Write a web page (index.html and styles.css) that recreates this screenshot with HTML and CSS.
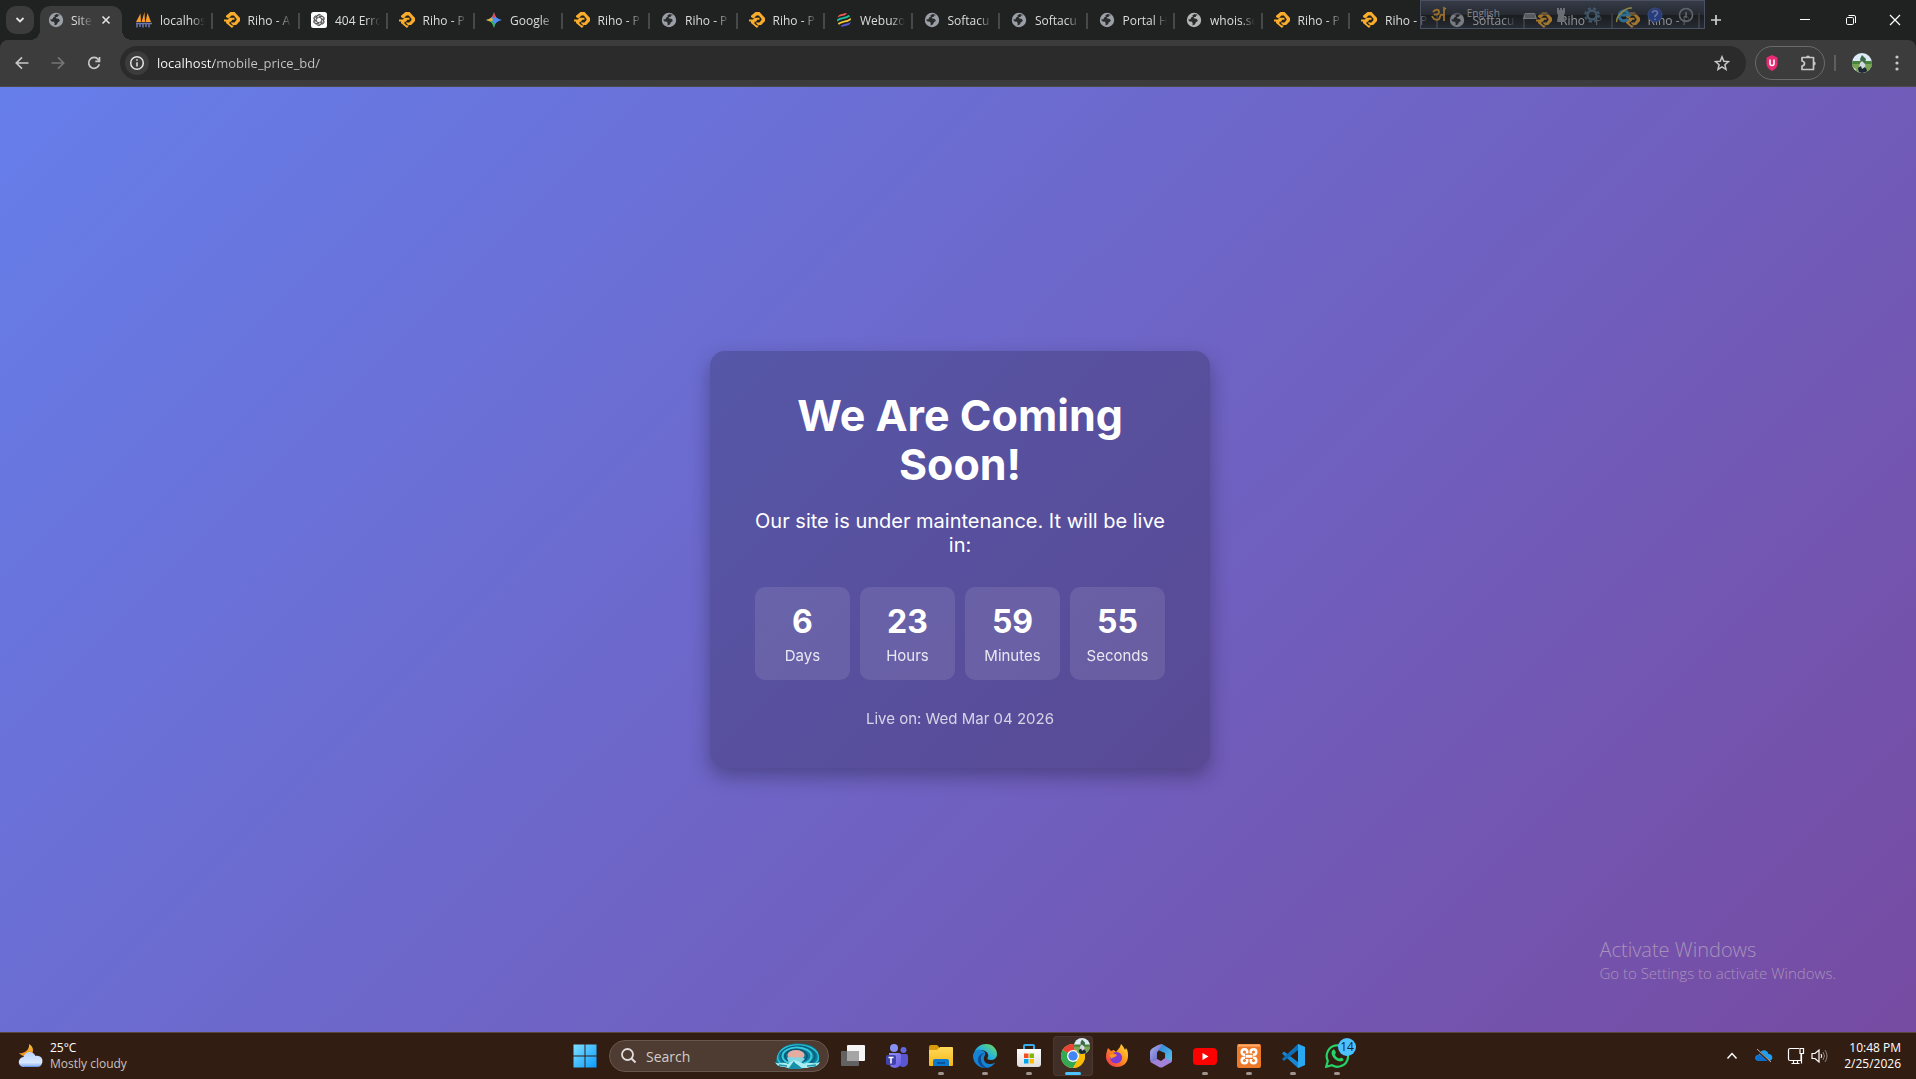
FILE: index.html
```html
<!DOCTYPE html>
<html lang="en">
<head>
<meta charset="utf-8">
<title>Site Under Maintenance</title>
<link rel="stylesheet" href="styles.css">
</head>
<body>
<svg class="defs" aria-hidden="true">
  <defs>
    <linearGradient id="gStart" x1="0" y1="0" x2="1" y2="1"><stop offset="0" stop-color="#7fe0ff"/><stop offset="1" stop-color="#0a9bff"/></linearGradient>
    <linearGradient id="gCloud" x1="0" y1="0" x2="0" y2="1"><stop offset="0" stop-color="#b9d0f8"/><stop offset=".7" stop-color="#d8e8ff"/><stop offset="1" stop-color="#7fa8ee"/></linearGradient>
    <linearGradient id="gMoon" x1="0" y1="0" x2="0" y2="1"><stop offset="0" stop-color="#f6c544"/><stop offset="1" stop-color="#f0860f"/></linearGradient>
    <linearGradient id="gTeams" x1="0" y1="0" x2="1" y2="1"><stop offset="0" stop-color="#8f93f5"/><stop offset="1" stop-color="#6a5be6"/></linearGradient>
    <linearGradient id="gFolder" x1="0" y1="0" x2="0" y2="1"><stop offset="0" stop-color="#ffd95a"/><stop offset="1" stop-color="#f7b718"/></linearGradient>
    <linearGradient id="gEdge" x1="0" y1="1" x2="1" y2="0"><stop offset="0" stop-color="#1277d0"/><stop offset=".5" stop-color="#28b4d8"/><stop offset="1" stop-color="#7be04a"/></linearGradient>
    <linearGradient id="gFox" x1="1" y1="0" x2="0" y2="1"><stop offset="0" stop-color="#ffe13a"/><stop offset=".5" stop-color="#ff8a1e"/><stop offset="1" stop-color="#f0245c"/></linearGradient>
    <linearGradient id="gM1" x1="0" y1="0" x2="1" y2="1"><stop offset="0" stop-color="#aab6f0"/><stop offset="1" stop-color="#5a55b8"/></linearGradient>
    <linearGradient id="gM2" x1="0" y1="0" x2="1" y2="1"><stop offset="0" stop-color="#2f7fd8"/><stop offset="1" stop-color="#58c6ea"/></linearGradient>
    <linearGradient id="gBag" x1="0" y1="0" x2="0" y2="1"><stop offset="0" stop-color="#fff"/><stop offset="1" stop-color="#dcdcdc"/></linearGradient>
    <clipPath id="cAv"><circle cx="10" cy="10" r="10"/></clipPath>
    <clipPath id="cWeb"><circle cx="8" cy="8" r="7"/></clipPath>
    <clipPath id="cGem"><path d="M8 0C8.800 4.600 11.400 7.200 16 8 11.400 8.800 8.800 11.400 8 16 7.200 11.400 4.600 8.800 0 8 4.600 7.200 7.200 4.600 8 0z"/></clipPath>
    <clipPath id="cPearl"><path d="M2 22C-1 17 4 2 17 1c14-2 26 2 27 12 1 7-2 11-5 11H6z"/></clipPath>
  </defs>
  <symbol id="globe" viewBox="0 0 16 16"><circle cx="8" cy="8" r="7.200" fill="currentColor"/><path d="M8.500 2 6.300 3.500l.5 1.300-1.700.8-.6 1.600L2 7.400l1.500 2 2.500.4.700 1.600-.2 2 2.300-1 1.200-2.200 1.800-1.300-.8-1.800-2.500-.6-1-1.200 2.300-.5.400-1.300 2.100-.5z" fill="#2b2d2d"/></symbol>
  <symbol id="riho" viewBox="0 0 16 16"><path d="M6.500 0h4L16 6v3l-3.800 4H9l-2.500-2.600h4L12.500 8V6.800L9.800 3.500H7.500L4.500 6.500 2 5V3.800z" fill="#f9ad2b"/><path d="M5.500 5.800h5v2H8.200L7 9.800H5.500v2L8 13.500h2L8 16l-6-5V9.500H0v-2h4z" fill="#f9ad2b"/></symbol>
  <symbol id="pma" viewBox="0 0 16 16"><path d="M0 10 4.500 1.500 5 10zM5.500 10 8.500 0l.5 10zM9.500 10 11.500 1l3.500 9z" fill="#f89c2c"/><path d="M0 11.500h16M1 15.500v-4M4 15v-3M7 15.500v-4M10 15v-3M13 15.500v-4" stroke="#6c78af" stroke-width="1.500" fill="none"/></symbol>
  <symbol id="gpt" viewBox="0 0 16 16"><rect width="16" height="16" rx="2.500" fill="#fff"/><g fill="none" stroke="#444" stroke-width=".8"><path id="petal" d="M6 7.200V4.500a2.300 2.300 0 0 1 4.400-.8M6 6l3-1.700a2.400 2.400 0 0 1 3.300 3"/><use href="#petal" transform="rotate(60 8 8)"/><use href="#petal" transform="rotate(120 8 8)"/><use href="#petal" transform="rotate(180 8 8)"/><use href="#petal" transform="rotate(240 8 8)"/><use href="#petal" transform="rotate(300 8 8)"/></g></symbol>
  <symbol id="gem" viewBox="0 0 16 16"><g clip-path="url(#cGem)"><path d="M0 0h16v16H0z" fill="#4c8df6"/><path d="M0 0h16L8 6z" fill="#ee4b3c"/><path d="M0 4h5l2 4-2 2H0z" fill="#e8b52a"/><path d="M0 9h6l3 3v4H0z" fill="#3bb54a"/></g></symbol>
  <symbol id="webuzo" viewBox="0 0 16 16" fill="none"><g clip-path="url(#cWeb)" stroke-width="1.800"><path d="M0 5.500C4 2 7 4.500 11 .5" stroke="#f15b50"/><path d="M0 9.500C5 4.500 9 8 15 2.500" stroke="#19c3a4"/><path d="M1 13C6 8 10 11.500 16 6" stroke="#f7c53a"/><path d="M4 15.500C8 11.500 12 14 16 10" stroke="#5a5ad6"/></g></symbol>
  <symbol id="avatar" viewBox="0 0 20 20"><g clip-path="url(#cAv)"><path d="M0 0h20v20H0z" fill="#dcebf5"/><path d="M0 8h20v5H0z" fill="#49823d"/><path d="M0 11h20v9H0z" fill="#78a553"/><path d="M8 6 10 2l4 4-1 4H9z" fill="#3c6a44"/><path d="m8 10 2-2 3 3 1 9H6z" fill="#d4dbe0"/><path d="m6 15 3-2 1 3 3-2 2 3-1 4H7z" fill="#1d2832"/><path d="m0 14 4 2-2 4H0z" fill="#dde5d8"/></g></symbol>
</svg>

<div class="screen">
  <header class="browser">
    <div class="tabstrip">
      <button class="tabsearch" aria-label="Search tabs"><svg width="12" height="12" viewBox="0 0 12 12"><path d="m2.500 4 3.500 3.500L9.500 4" fill="none" stroke="#e3e3e3" stroke-width="1.800"/></svg></button>
      <div class="tab-active"><svg class="fav cool" ><use href="#globe"/></svg><span class="title">Site</span><button class="close" aria-label="Close tab"><svg width="10" height="10" viewBox="0 0 10 10"><path d="m1.500 1.500 7 7m0-7-7 7" stroke="#e3e3e3" stroke-width="1.600"/></svg></button></div>
      <nav class="tabs" aria-label="Tabs">
        <a class="tab" href="#"><svg class="fav"><use href="#pma"/></svg><span class="title">localhos</span></a>
        <a class="tab" href="#"><svg class="fav"><use href="#riho"/></svg><span class="title">Riho - A</span></a>
        <a class="tab" href="#"><svg class="fav"><use href="#gpt"/></svg><span class="title">404 Erro</span></a>
        <a class="tab" href="#"><svg class="fav"><use href="#riho"/></svg><span class="title">Riho - P</span></a>
        <a class="tab" href="#"><svg class="fav"><use href="#gem"/></svg><span class="title">Google</span></a>
        <a class="tab" href="#"><svg class="fav"><use href="#riho"/></svg><span class="title">Riho - P</span></a>
        <a class="tab" href="#"><svg class="fav cool"><use href="#globe"/></svg><span class="title">Riho - P</span></a>
        <a class="tab" href="#"><svg class="fav"><use href="#riho"/></svg><span class="title">Riho - P</span></a>
        <a class="tab" href="#"><svg class="fav"><use href="#webuzo"/></svg><span class="title">Webuzo</span></a>
        <a class="tab" href="#"><svg class="fav cool"><use href="#globe"/></svg><span class="title">Softacu</span></a>
        <a class="tab" href="#"><svg class="fav cool"><use href="#globe"/></svg><span class="title">Softacu</span></a>
        <a class="tab" href="#"><svg class="fav cool"><use href="#globe"/></svg><span class="title">Portal H</span></a>
        <a class="tab" href="#"><svg class="fav"><use href="#globe"/></svg><span class="title">whois.sc</span></a>
        <a class="tab" href="#"><svg class="fav"><use href="#riho"/></svg><span class="title">Riho - P</span></a>
        <a class="tab" href="#"><svg class="fav"><use href="#riho"/></svg><span class="title">Riho - P</span></a>
        <a class="tab" href="#"><svg class="fav"><use href="#globe"/></svg><span class="title">Softacu</span></a>
        <a class="tab" href="#"><svg class="fav"><use href="#riho"/></svg><span class="title">Riho - P</span></a>
        <a class="tab" href="#"><svg class="fav"><use href="#riho"/></svg><span class="title">Riho - P</span></a>
      </nav>
      <button class="newtab" aria-label="New tab"><svg width="12" height="12" viewBox="0 0 12 12"><path d="M6 1v10M1 6h10" stroke="#d0d0d0" stroke-width="1.700"/></svg></button>
      <div class="winctl">
        <button aria-label="Minimize"><svg width="12" height="12" viewBox="0 0 12 12"><path d="M1 5.500h10" stroke="#fff"/></svg></button>
        <button aria-label="Restore"><svg width="12" height="12" viewBox="0 0 12 12" fill="none" stroke="#fff"><rect x="1.500" y="3.500" width="7" height="7" rx="1.200"/><path d="M3.500 1.500h5.500a1.500 1.500 0 0 1 1.500 1.500v6"/></svg></button>
        <button aria-label="Close"><svg width="12" height="12" viewBox="0 0 12 12"><path d="m1 1 10 10m0-10L1 11" stroke="#fff" stroke-width="1.200"/></svg></button>
      </div>
      <div class="langbar">
        <svg width="18" height="18" viewBox="0 0 18 18" fill="none" stroke="#9b702b" stroke-width="1.800"><path d="M3 6c2-3 6-3 6 0s-4 3-5 2M2 10c2 5 7 5 8 1 0-3 2-3 4-1V2l2 1M14 4v11"/></svg>
        <span>English</span>
        <svg class="kb" width="16" height="16" viewBox="0 0 16 16"><path d="M3 6h10l2 6H1z" fill="#73777c"/><path d="M3 8h10M3 10h10" stroke="#3b3f47"/></svg>
        <svg width="16" height="16" viewBox="0 0 16 16"><path d="M4 1h2v2h1V1h2v2h1V1h2v5l-1 2 1 7H4l1-7-1-2z" fill="#6b6e74"/></svg>
        <svg width="16" height="16" viewBox="0 0 16 16" fill="none" stroke="#41586a"><circle cx="8" cy="8" r="4.500" stroke-width="2.500"/><circle cx="8" cy="8" r="6.800" stroke-width="2" stroke-dasharray="3 2.500"/></svg>
        <svg width="18" height="18" viewBox="0 0 18 18" fill="none"><path d="M4 9h10a5 5 0 1 0-1 4" stroke="#2f6c8f" stroke-width="3"/><path d="M2 16C0 12 10 1 17 2" stroke="#8f8540" stroke-width="1.500"/></svg>
        <svg width="16" height="16" viewBox="0 0 16 16"><circle cx="8" cy="8" r="7" fill="#263c7c" stroke="#394c80"/><path d="M5.500 6c0-3 5-3 5 0 0 2-2.500 1.500-2.500 4m0 1.500v1.500" stroke="#69749a" stroke-width="1.700" fill="none"/></svg>
        <svg width="16" height="16" viewBox="0 0 16 16" fill="none" stroke="#62666c" stroke-width="1.600"><circle cx="8" cy="8" r="6.500"/><path d="M8 5v6"/></svg>
      </div>
    </div>
    <div class="toolbar">
      <div class="navbtns">
        <button aria-label="Back"><svg width="16" height="16" viewBox="0 0 16 16"><path d="M14.500 8H2.500M8 2.300 2.300 8 8 13.700" fill="none" stroke="#c7c7c7" stroke-width="1.700"/></svg></button>
        <button aria-label="Forward"><svg width="16" height="16" viewBox="0 0 16 16"><path d="M1.500 8h12M8 2.300 13.700 8 8 13.700" fill="none" stroke="#757575" stroke-width="1.700"/></svg></button>
        <button aria-label="Reload"><svg width="16" height="16" viewBox="0 0 16 16"><path d="M13.300 9.200A5.400 5.400 0 1 1 12.300 4.500L13.500 6M13.500 2v4.300H9.300" fill="none" stroke="#c7c7c7" stroke-width="1.700"/></svg></button>
      </div>
      <div class="omnibox">
        <button class="info" aria-label="View site information"><svg width="16" height="16" viewBox="0 0 16 16"><circle cx="8" cy="8" r="6.300" fill="none" stroke="#e3e3e3" stroke-width="1.500"/><path d="M8 7.200v4.300M8 4.300v1.500" stroke="#e3e3e3" stroke-width="1.500"/></svg></button>
        <input class="url" type="text" aria-label="Address" value="localhost/mobile_price_bd/">
        <button class="star" aria-label="Bookmark this tab"><svg width="16" height="16" viewBox="0 0 16 16"><path d="m8 1.800 1.800 4.400 4.700.4-3.600 3.100 1.100 4.600L8 11.800l-4 2.500 1.100-4.600-3.600-3.100 4.700-.4z" fill="none" stroke="#c7c7c7" stroke-width="1.500"/></svg></button>
      </div>
      <div class="exts">
        <button aria-label="Blocker"><svg width="16" height="16" viewBox="0 0 16 16"><path d="M8 0 13.500 2.500V9c0 3-2.500 5.500-5.500 7C5 14.500 2.500 12 2.500 9V2.500z" fill="#e82b74"/><path d="M6 4.500V8.500a2 2 0 0 0 4 0V4.500" fill="none" stroke="#fff" stroke-width="1.600"/></svg></button>
        <button aria-label="Extensions"><svg width="18" height="18" viewBox="0 0 18 18"><path d="M3 3.500h11.500v12H3v-3.500q2.500-.5 2.500-2.500T3 7z" fill="none" stroke="#c7c7c7" stroke-width="1.700" stroke-linejoin="round"/><path d="M7 3.500a2 2 0 0 1 4 0zM14.700 7.500a2 2 0 0 1 0 4z" fill="#c7c7c7"/></svg></button>
      </div>
      <span class="sep"></span>
      <button class="profile" aria-label="Profile"><svg width="20" height="20"><use href="#avatar"/></svg></button>
      <button class="menu" aria-label="Menu"><svg width="4" height="18" viewBox="0 0 4 18" fill="#c7c7c7"><circle cx="2" cy="3" r="1.600"/><circle cx="2" cy="9" r="1.600"/><circle cx="2" cy="15" r="1.600"/></svg></button>
    </div>
  </header>

  <main class="page">
    <section class="card">
      <h1>We Are Coming Soon!</h1>
      <p class="lead">Our site is under maintenance. It will be live in:</p>
      <div class="countdown">
        <div class="unit"><strong>6</strong><span>Days</span></div>
        <div class="unit"><strong>23</strong><span>Hours</span></div>
        <div class="unit"><strong>59</strong><span>Minutes</span></div>
        <div class="unit"><strong>55</strong><span>Seconds</span></div>
      </div>
      <p class="date">Live on: Wed Mar 04 2026</p>
    </section>
    <div class="watermark"><div class="wm-title">Activate Windows</div><div class="wm-text">Go to Settings to activate Windows.</div></div>
  </main>

  <footer class="taskbar">
    <button class="weather">
      <svg width="26" height="26" viewBox="0 0 26 26"><path d="M11 1c5 3 5 8 2 11-4 3-10 1-12-2 6 1 11-4 10-9z" fill="url(#gMoon)"/><path d="M6 24a5 5 0 0 1-.5-10C7 8 15 7 17.500 13c6-1 8 4 6.500 7.500-.8 2.500-2.500 3.500-5 3.500z" fill="url(#gCloud)"/><path d="M6 23.500h14" stroke="#6c99e8"/></svg>
      <span class="wtext"><span>25°C</span><span class="dim">Mostly cloudy</span></span>
    </button>
    <div class="apps">
      <button class="app" aria-label="Start"><svg width="24" height="24" viewBox="0 0 24 24"><path d="M.5.5h11v11H.5zM12.500.5h11v11h-11zM.5 12.500h11v11H.5zM12.500 12.500h11v11h-11z" fill="url(#gStart)"/></svg></button>
      <label class="search"><svg width="18" height="18" viewBox="0 0 18 18"><circle cx="7.500" cy="7.500" r="5.500" fill="none" stroke="#e2ddda" stroke-width="1.800"/><path d="m11.500 11.500 4 4" stroke="#e2ddda" stroke-width="2"/></svg><input type="text" placeholder="Search" aria-label="Search"><svg width="46" height="26" viewBox="0 0 46 26"><g clip-path="url(#cPearl)"><path d="M0 0h46v26H0z" fill="#0d7e9a"/><g fill="none"><ellipse cx="23" cy="14" rx="20.500" ry="12" stroke="#2bc0d6" stroke-width="1.500"/><ellipse cx="23" cy="13" rx="17" ry="10" stroke="#0b5f7c" stroke-width="1.500"/><ellipse cx="22" cy="13" rx="14.500" ry="8.500" stroke="#38cbdc" stroke-width="2"/><ellipse cx="21" cy="13" rx="11" ry="6.500" stroke="#0a567a" stroke-width="1.800"/></g><ellipse cx="21" cy="12" rx="8.500" ry="5" fill="#e6aca0"/><path d="M12 15c4-3 6 1 9-1 3 2 5-2 9 2l-4 4H14z" fill="#7fd5e2"/></g><path d="M0 19c3 3 8-1 13 2l6-4 4 1 6 3c5-3 10 1 16-2-3 6-9 4-13 6H13C8 23 3 25 0 19z" fill="#a9edf0"/><path d="m13 26 6-8 1 2 3 2 5 4z" fill="#1690a9"/><path d="m4 22 8 1M32 23l9-1" stroke="#2398ad" stroke-width="1.500"/></svg></label>
      <button class="app" aria-label="Task view"><svg width="24" height="24" viewBox="0 0 24 24"><rect x="6" y="1" width="18" height="16" rx="1" fill="#f5f5f5"/><rect x="0" y="7" width="18" height="15" rx="1" fill="#626262"/><path d="M6 7h12v10H6z" fill="#a5a5a5"/></svg></button>
      <button class="app" aria-label="Teams"><svg width="24" height="24" viewBox="0 0 24 24"><circle cx="9" cy="4" r="4" fill="#8890f4"/><circle cx="18.500" cy="6" r="3" fill="#6069e0"/><path d="M14 10h7a2 2 0 0 1 2 2v6a5 5 0 0 1-9 3z" fill="#5a55d0"/><path d="M4 9h10a2 2 0 0 1 2 2v7a6 6 0 0 1-12 0z" fill="url(#gTeams)"/><rect x="1" y="11" width="10" height="10" rx="2" fill="#4242ad"/><path d="M3.500 13.500h5M6 13.500v6" stroke="#fff" stroke-width="1.500"/></svg></button>
      <button class="app open" aria-label="File Explorer"><svg width="24" height="24" viewBox="0 0 24 24"><path d="M0 3q0-2 2-2h6l2 2v4H0z" fill="#d99a0b"/><path d="M0 6h8l3-3h12q1 0 1 1v17q0 1-1 1H1q-1 0-1-1z" fill="url(#gFolder)"/><path d="M4 22v-5q0-2 2-2h12q2 0 2 2v5z" fill="#0b79cc"/><path d="M8 19h8" stroke="#084c91" stroke-width="1.600"/></svg></button>
      <button class="app open" aria-label="Edge"><svg width="24" height="24" viewBox="0 0 24 24"><path d="M1 9C3 3 8 0 13 0c7 0 11 5 11 10 0 4-3 6-6 6-3 0-4-1-3.500-2C17 10 13 6 8 6 4 6 2 8 1 9z" fill="url(#gEdge)"/><path d="M0 12c0-4 4-7 8-6 4 1 5 3 4 5-3 4 0 10 6 9 2 0 4-2 4-1-2 3-6 5-10 5C5 24 0 18 0 12z" fill="#1683d2"/><path d="M8 13c-1 6 3 10 7 11-6 1-10-4-10-8 0-4 3-7 7-7-2 1-4 2-4 4z" fill="#0b4a94"/></svg></button>
      <button class="app open" aria-label="Store"><svg width="24" height="24" viewBox="0 0 24 24"><path d="M7 5V2q0-1 1-1h8q1 0 1 1v3" fill="none" stroke="#35aef0" stroke-width="2"/><path d="M0 5h24v15q0 3-3 3H3q-3 0-3-3z" fill="url(#gBag)"/><path d="M7 9.500h4.500V14H7z" fill="#f25022"/><path d="M12.500 9.500H17V14h-4.500z" fill="#7fba00"/><path d="M7 15h4.500v4.500H7z" fill="#00a4ef"/><path d="M12.500 15H17v4.500h-4.500z" fill="#ffb900"/></svg></button>
      <button class="app open current" aria-label="Chrome"><svg width="24" height="24" viewBox="0 0 24 24"><circle cx="12" cy="12" r="12" fill="#ffcd40"/><path d="M12 12 1.600 6A12 12 0 0 1 22.400 6z" fill="#ea4335"/><path d="M12 12 1.600 6A12 12 0 0 0 12 24l5.200-9z" fill="#34a853"/><path d="M12 6h10.400A12 12 0 0 1 12 24l5.200-9z" fill="#fbbc04"/><circle cx="12" cy="12" r="6" fill="#fff"/><circle cx="12" cy="12" r="4.700" fill="#4285f4"/></svg><svg class="overlay" width="16" height="16"><use href="#avatar"/></svg></button>
      <button class="app" aria-label="Firefox"><svg width="24" height="24" viewBox="0 0 24 24"><path d="m3 4 3 3 3-1 2 2 4-5 1-3c3 3 3 4 4 6l1-2c2 3 2 5 2 8 0 7-5 11-11 11S1 18 1 13c0-4 1-6 2-9z" fill="url(#gFox)"/><path d="M8 9c5-3 10 1 9 6-1 4-6 6-10 3-2-2-2-4-1-5 2 1 4 1 6-2z" fill="#7b3bd4"/><path d="M4 11c3-1 4 0 7 0-1 2-4 2-4 4" fill="#ff9a20"/></svg></button>
      <button class="app" aria-label="Microsoft 365"><svg width="24" height="24" viewBox="0 0 24 24"><path d="M13 0 9 1 3 4.500Q1 6 1 8v8l3 2 4-2V9q0-1 1-2l5-4z" fill="url(#gM1)"/><path d="m13 0 8 5q2 1 2 3v8q0 2-2 3l-5-2V9L9 6q4-3 4-6z" fill="url(#gM2)"/><path d="M1 15q0 3 2 4l7 4q2 1 4 0l7-4q2-1 2-4-1 2-3 1l-4-2-4 3-4-2-3 2q-3 1-4-2z" fill="#a281d8"/></svg></button>
      <button class="app open" aria-label="YouTube"><svg width="24" height="24" viewBox="0 0 24 24"><rect y="4" width="24" height="17" rx="4" fill="#f00"/><path d="m9.500 9 6 3.500-6 3.500z" fill="#fff"/></svg></button>
      <button class="app open" aria-label="XAMPP"><svg width="24" height="24" viewBox="0 0 24 24"><rect width="24" height="24" rx="2" fill="#ed7a2b"/><path d="M1 1.500h22" stroke="#ffac67" stroke-width="2"/><g fill="#ed7a2b" stroke="#fff" stroke-width="2.500"><circle cx="7.500" cy="8" r="2.800"/><circle cx="16.500" cy="8" r="2.800"/><circle cx="7.500" cy="16.500" r="2.800"/><circle cx="16.500" cy="16.500" r="2.800"/></g><path d="M8 9.500h8v5.500H8z" fill="#ed7a2b"/><path d="M8.500 12.300h7" stroke="#fff" stroke-width="2.800"/></svg></button>
      <button class="app open" aria-label="Visual Studio Code"><svg width="24" height="24" viewBox="0 0 24 24"><path d="M17 0 24 3v18l-7 3-16-14.500 2-2L17 18z" fill="#1789d4"/><path d="M17 0v6L3 17l-2-2z" fill="#0d70b8"/><path d="m17 0 7 3v18l-7 3z" fill="#2aa9f2"/></svg></button>
      <button class="app open" aria-label="WhatsApp"><svg width="24" height="24" viewBox="0 0 24 24"><path d="m1.200 22.800 1.600-6A10.700 10.700 0 1 1 7 21.300z" fill="none" stroke="#25d366" stroke-width="2.200"/><path d="M8 5.800c-5 4 4 14 9.500 11.200 2-1 1-2-.5-3s-2 .8-3 .6c-2-.7-4-2.800-4-4 0-.6 1.500-1 .5-3C9.500 5.500 9 5.300 8 5.800z" fill="#25d366"/></svg><span class="badge">14</span></button>
    </div>
    <div class="tray">
      <button aria-label="Show hidden icons"><svg width="12" height="12" viewBox="0 0 12 12"><path d="m1.500 8.500 4.500-5 4.500 5" fill="none" stroke="#fff" stroke-width="1.500"/></svg></button>
      <button class="cloud" aria-label="OneDrive"><svg width="18" height="16" viewBox="0 0 18 16"><path d="M4 13C-1 13-1 7 4 6.500 6 1 12 1 13.500 6 18 6 19 12 14 13z" fill="#1f9ff2"/><path d="M4 13c-4 0-4-6 0-6 3 0 4 3 9 6z" fill="#0b6fd0"/><path d="m1 1 15 14" stroke="#3a2015" stroke-width="2"/><path d="m2 1 14 13" stroke="#b7a89e"/></svg></button>
      <button class="net" aria-label="Network and volume"><svg width="18" height="18" viewBox="0 0 18 18" fill="none" stroke="#fff"><path d="M12 1.500H3Q1.500 1.500 1.500 3v9Q1.500 13.500 3 13.500h11v-7M4.500 16.500h8M6.500 14v2.500M10.500 14v2.500M13 1.500h3.500v5H13zM14.500 7v9.500" stroke-width="1.200"/></svg><svg width="17" height="16" viewBox="0 0 17 16" fill="none" stroke="#fff"><path d="M1 5.500h3L8 2v12l-4-3.500H1z" stroke-width="1.200"/><path d="M10 6q1.500 2 0 4" stroke-width="1.200"/><path d="M12 4q3 4 0 8M14 2q4 6 0 12" stroke="#8d817b"/></svg></button>
      <button class="clock"><span>10:48 PM</span><span>2/25/2026</span></button>
    </div>
  </footer>
</div>
</body>
</html>
```
FILE: styles.css
```css
* { box-sizing: border-box; }
body { margin: 0; font-family: "Open Sans", "Noto Sans", sans-serif; font-size: 12px; color: #fff; }
button, input { font: inherit; color: inherit; border: 0; padding: 0; background: none; }
button { display: flex; align-items: center; justify-content: center; flex: none; }
svg { display: block; flex: none; }
.defs { position: absolute; width: 0; height: 0; }
.screen { display: flex; flex-direction: column; min-height: 100vh; }

/* Browser chrome */
.browser { background: #202221; }
.tabstrip { position: relative; display: flex; align-items: flex-end; height: 40px; padding-left: 6px; }
.tabsearch { width: 28px; height: 28px; border-radius: 10px; background: #3c3c3c; margin: 0 6px 6px 0; }
.tab-active { position: relative; display: flex; align-items: center; width: 82px; height: 34px; padding: 0 11px 6px 8px; border-radius: 10px 10px 0 0; background: #3c3c3c; flex: none; }
.tab-active::before, .tab-active::after { content: ""; position: absolute; bottom: 0; width: 10px; height: 10px; }
.tab-active::before { right: 100%; background: radial-gradient(circle at 0 0, transparent 10px, #3c3c3c 10px); }
.tab-active::after { left: 100%; background: radial-gradient(circle at 100% 0, transparent 10px, #3c3c3c 10px); }
.fav { width: 16px; height: 16px; color: #b5b5b5; }
.cool { color: #9aa0a6; }
.title { flex: 1; min-width: 0; margin-left: 8px; overflow: hidden; white-space: nowrap; color: #dcdcdc; -webkit-mask-image: linear-gradient(to left, transparent, #000 14px); mask-image: linear-gradient(to left, transparent, #000 14px); }
.close { margin-left: 8px; }
.tab-active .title { margin-left: 7px; }
.tabs { flex: 1; min-width: 0; display: flex; margin-left: 3px; }
.tab { flex: 1; min-width: 0; display: flex; align-items: center; height: 34px; padding: 0 8px 6px 11px; text-decoration: none; background: linear-gradient(#474848, #474848) right 7px / 2px 16px no-repeat; }
.newtab { width: 32px; height: 40px; }
.winctl { display: flex; margin-left: 50px; }
.winctl button { width: 46px; height: 40px; }
.winctl button:last-child { width: 42px; }
.langbar { position: absolute; top: 0; right: 211px; width: 285px; height: 29px; display: flex; align-items: center; justify-content: space-between; padding: 0 10px 0 9px; border: 1px solid #4b5163; background: linear-gradient(rgba(60, 67, 84, .75), rgba(42, 46, 58, .7) 50%, rgba(16, 18, 25, .35) 52%, rgba(45, 53, 73, .45)); font-size: 10px; line-height: 24px; color: #85878b; }
.langbar span { align-self: flex-start; margin-left: 4px; }
.langbar .kb { margin-left: 8px; }

.toolbar { display: flex; align-items: center; height: 47px; padding: 0 17px 0 14px; border-radius: 8px 8px 0 0; background: #3c3c3c; border-bottom: 1px solid #4a4a48; }
.navbtns { display: flex; gap: 20px; }
.omnibox { flex: 1; display: flex; align-items: center; height: 34px; margin: 0 9px 0 18px; padding: 0 16px 0 5px; border-radius: 17px; background: #2b2b2b; }
.info { width: 24px; height: 24px; border-radius: 12px; background: #3c3c3c; }
.url { flex: 1; min-width: 0; margin-left: 8px; font-size: 13px; outline: 0; color: transparent; background: linear-gradient(to right, #fff 57px, #c7c7c7 57px); -webkit-background-clip: text; background-clip: text; }
.exts { display: flex; align-items: center; gap: 19px; width: 70px; height: 34px; padding: 0 8px; border: 1px solid #6a6a6a; border-radius: 17px; }
.sep { width: 2px; height: 16px; margin: 0 16px 0 9px; background: #5f5f5f; }
.menu { margin-left: 23px; }

/* Countdown page */
.page { position: relative; flex: 1; display: flex; align-items: center; justify-content: center; padding: 20px 20px 20px 24px; background: linear-gradient(135deg, #667eea, #764ba2); }
.card { display: flex; flex-direction: column; align-items: center; width: 500px; max-width: 100%; padding: 40px; border-radius: 15px; background: rgba(0, 0, 0, .2); box-shadow: 0 8px 20px rgba(0, 0, 0, .3); text-align: center; font-family: Inter, "Open Sans", sans-serif; }
.card h1 { margin: 0 0 20px; font-size: 43px; line-height: 49px; font-weight: 700; }
.lead { margin: 0 0 30px; font-size: 20px; line-height: 24px; }
.countdown { display: flex; gap: 10px; }
.unit { display: flex; flex-direction: column; gap: 5px; width: 95px; padding: 15px 0; border-radius: 10px; background: rgba(255, 255, 255, .1); }
.unit strong { font-size: 32px; line-height: 40px; }
.unit span { font-size: 15px; line-height: 18px; opacity: .85; }
.date { margin: 30px 0 0; font-size: 15px; line-height: 18px; opacity: .75; }
.watermark { position: absolute; right: 80px; bottom: 49px; color: #a892ba; font-weight: 300; }
.wm-title { font-size: 20px; line-height: 26px; }
.wm-text { font-size: 15px; line-height: 20px; }

/* Taskbar */
.taskbar { display: grid; grid-template-columns: 1fr auto 1fr; align-items: center; height: 47px; border-top: 1px solid #59453e; background: #321d13; font-size: 12px; }
.weather { justify-self: start; gap: 6px; margin-left: 18px; text-align: left; }
.wtext, .clock { display: flex; flex-direction: column; line-height: 16px; }
.dim { color: #c9c1bd; }
.apps { display: flex; align-items: center; padding-left: 6px; }
.app { position: relative; width: 40px; height: 40px; margin: 0 2px; border-radius: 4px; }
.search { display: flex; align-items: center; width: 220px; height: 32px; margin: 0 2px; padding: 0 7px 0 10px; border: 1px solid #69564c; border-radius: 16px; background: #4e3c33; }
.search input { flex: 1; min-width: 0; margin-left: 8px; font-size: 14px; outline: 0; }
.search input::placeholder { color: #d3ccc8; opacity: 1; }
.open::after { content: ""; position: absolute; left: 17px; bottom: 1px; width: 6px; height: 3px; border-radius: 2px; background: #a0948f; }
.current { background: #412e26; box-shadow: inset 0 0 0 1px #4b3931; }
.current::after { left: 12px; width: 16px; background: #4cc2ff; }
.overlay { position: absolute; right: 3px; top: 2px; }
.badge { position: absolute; right: 1px; top: 2px; width: 18px; height: 18px; border-radius: 9px; background: #4cc2ff; color: #152733; line-height: 17px; text-align: center; }
.tray { display: flex; justify-self: end; align-items: center; padding-right: 15px; }
.cloud { margin-left: 17px; }
.net { gap: 6px; margin-left: 14px; }
.clock { align-items: flex-end; margin-left: 16px; }
```
